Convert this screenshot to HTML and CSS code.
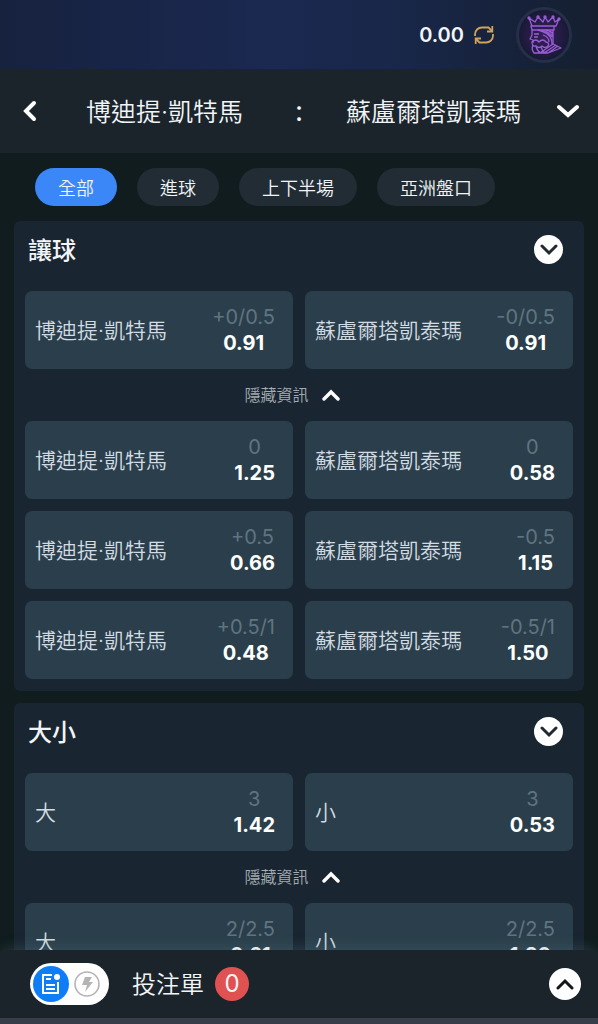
FILE: index.html
```html
<!DOCTYPE html>
<html lang="zh-Hant">
<head>
    <meta charset="UTF-8">
    <meta name="viewport" content="width=device-width, initial-scale=1.0">
    <title>博迪提·凱特馬 : 蘇盧爾塔凱泰瑪</title>
    <link rel="stylesheet" href="styles.css">
</head>
<body>
    <div class="app">
        <header class="topbar">
            <span class="balance">0.00</span>
            <button class="icon-btn refresh" aria-label="重新整理">
                <svg width="20" height="20" viewBox="0 0 20 20" fill="none" stroke="#cfa35a" stroke-width="1.8">
                    <path d="M1 11V9.500C1 5.500 4 2.500 8 2.500h6.500L18 6M19 9v1.500c0 4-3 7-7 7H5.500L2 14"/>
                    <path d="M18.300 1v5.500H13M1.700 19v-5.500H7"/>
                </svg>
            </button>
            <button class="icon-btn avatar" aria-label="會員">
                <svg width="36" height="42" viewBox="0 0 36 42" fill="none" stroke="#9a5fd6" stroke-width="1.3" stroke-linejoin="round">
                    <path d="M6 12 3 4l6 4 3-5 5 5 2-5 3 5 5-5 2 5 4-3-3 7zM5 12h23v4H6z"/>
                    <circle cx="3" cy="4" r="1"/>
                    <circle cx="12" cy="3" r="1"/>
                    <circle cx="19" cy="3" r="1"/>
                    <circle cx="27" cy="3" r="1"/>
                    <circle cx="33" cy="5" r="1"/>
                    <path d="M6 16v5l-2 4 3 1v3M8 20h5M8 23h4"/>
                    <path d="M12 16q8 2 14 7M16 16q7 2 11 6M20 16q5 1 7 4M27 16v14"/>
                    <path d="M6 28q4-4 7 0 4-4 7 0 4 1 2 4-3 3-6 0-3 3-6 0-4 1-4-4zM17 21q6 2 6 7M21 20q5 3 5 10"/>
                    <path d="M7 31q-2 4 1 8h14M10 32q1 5 5 7M15 33q1 4 4 6M14 39l13-9 8 4-13 5M18 39l12-8M22 39l10-7"/>
                </svg>
            </button>
        </header>

        <div class="match">
            <button class="icon-btn" aria-label="返回">
                <svg width="14" height="22" viewBox="0 0 14 22" fill="none" stroke="#fff" stroke-width="4" stroke-linecap="round"><path d="M11 3 3 11l8 8"/></svg>
            </button>
            <h1 class="team">博迪提·凱特馬</h1>
            <span class="versus">:</span>
            <h1 class="team">蘇盧爾塔凱泰瑪</h1>
            <button class="icon-btn" aria-label="選擇賽事">
                <svg width="22" height="14" viewBox="0 0 22 14" fill="none" stroke="#fff" stroke-width="4" stroke-linecap="round"><path d="m2 3 9 8 9-8"/></svg>
            </button>
        </div>

        <nav class="tabs">
            <button class="tab active">全部</button>
            <button class="tab">進球</button>
            <button class="tab">上下半場</button>
            <button class="tab">亞洲盤口</button>
        </nav>

        <main class="markets">
            <section class="market">
                <div class="market-head">
                    <h2>讓球</h2>
                    <button class="round-btn" aria-label="收合">
                        <svg width="18" height="12" viewBox="0 0 18 12" fill="none" stroke="#222a30" stroke-width="3" stroke-linecap="round"><path d="m2 2 7 7 7-7"/></svg>
                    </button>
                </div>
                <div class="odds-row">
                    <button class="odds"><span class="name">博迪提·凱特馬</span><span class="price"><span class="line">+0/0.5</span><b>0.91</b></span></button>
                    <button class="odds"><span class="name">蘇盧爾塔凱泰瑪</span><span class="price"><span class="line">-0/0.5</span><b>0.91</b></span></button>
                </div>
                <button class="toggle-info"><span class="toggle-text">隱藏資訊</span>
                    <svg width="18" height="12" viewBox="0 0 18 12" fill="none" stroke="#fff" stroke-width="3.4" stroke-linecap="round"><path d="m2 10 7-7 7 7"/></svg>
                </button>
                <div class="odds-row">
                    <button class="odds"><span class="name">博迪提·凱特馬</span><span class="price"><span class="line">0</span><b>1.25</b></span></button>
                    <button class="odds"><span class="name">蘇盧爾塔凱泰瑪</span><span class="price"><span class="line">0</span><b>0.58</b></span></button>
                    <button class="odds"><span class="name">博迪提·凱特馬</span><span class="price"><span class="line">+0.5</span><b>0.66</b></span></button>
                    <button class="odds"><span class="name">蘇盧爾塔凱泰瑪</span><span class="price"><span class="line">-0.5</span><b>1.15</b></span></button>
                    <button class="odds"><span class="name">博迪提·凱特馬</span><span class="price"><span class="line">+0.5/1</span><b>0.48</b></span></button>
                    <button class="odds"><span class="name">蘇盧爾塔凱泰瑪</span><span class="price"><span class="line">-0.5/1</span><b>1.50</b></span></button>
                </div>
            </section>

            <section class="market">
                <div class="market-head">
                    <h2>大小</h2>
                    <button class="round-btn" aria-label="收合">
                        <svg width="18" height="12" viewBox="0 0 18 12" fill="none" stroke="#222a30" stroke-width="3" stroke-linecap="round"><path d="m2 2 7 7 7-7"/></svg>
                    </button>
                </div>
                <div class="odds-row">
                    <button class="odds"><span class="name">大</span><span class="price"><span class="line">3</span><b>1.42</b></span></button>
                    <button class="odds"><span class="name">小</span><span class="price"><span class="line">3</span><b>0.53</b></span></button>
                </div>
                <button class="toggle-info"><span class="toggle-text">隱藏資訊</span>
                    <svg width="18" height="12" viewBox="0 0 18 12" fill="none" stroke="#fff" stroke-width="3.4" stroke-linecap="round"><path d="m2 10 7-7 7 7"/></svg>
                </button>
                <div class="odds-row">
                    <button class="odds"><span class="name">大</span><span class="price"><span class="line">2/2.5</span><b>0.61</b></span></button>
                    <button class="odds"><span class="name">小</span><span class="price"><span class="line">2/2.5</span><b>1.20</b></span></button>
                </div>
            </section>
        </main>

        <footer class="betslip">
            <button class="mode" aria-label="切換投注模式">
                <span class="mode-slip">
                    <svg width="20" height="22" viewBox="0 0 20 22" fill="none" stroke="#fff" stroke-width="2">
                        <path d="M11 2H2v18h15V9M5 6h5M5 12h9M5 16h9"/>
                        <circle cx="16" cy="4" r="3" fill="#fff" stroke="none"/>
                    </svg>
                </span>
                <svg width="26" height="26" viewBox="0 0 26 26" fill="none">
                    <circle cx="13" cy="13" r="12" stroke="#b4b4b6" stroke-width="1.6"/>
                    <path d="M11 6h7l-3 5h4l-8 10 2-7H8z" fill="#b4b4b6"/>
                </svg>
            </button>
            <span class="slip-title">投注單</span>
            <span class="count">0</span>
            <button class="round-btn large" aria-label="展開投注單">
                <svg width="18" height="12" viewBox="0 0 18 12" fill="none" stroke="#11171b" stroke-width="3" stroke-linecap="round"><path d="m2 10 7-7 7 7"/></svg>
            </button>
        </footer>
    </div>
</body>
</html>
```
FILE: styles.css
```css
* {
    box-sizing: border-box;
}
body {
    margin: 0;
    background-color: #101c1d;
    color: #f2f5f7;
    font-family: Inter, 'Noto Sans CJK TC', sans-serif;
}
button {
    border: none;
    padding: 0;
    background: none;
    color: inherit;
    font: inherit;
    cursor: pointer;
}
svg {
    display: block;
}
.app {
    display: flex;
    flex-direction: column;
    height: 100vh;
}
.icon-btn {
    display: flex;
    align-items: center;
    justify-content: center;
}

/* 頂部餘額 */
.topbar {
    display: flex;
    flex: none;
    align-items: center;
    justify-content: flex-end;
    height: 69px;
    padding-right: 26px;
    background: linear-gradient(90deg, #17223f 0%, #1b2850 45%, #19274a 65%, #151f30 100%);
}
.balance {
    font-size: 20px;
    font-weight: 600;
}
.refresh {
    margin: 0 22px 0 10px;
}
.avatar {
    width: 56px;
    height: 56px;
    border: 3px solid #252f48;
    border-radius: 50%;
    background: radial-gradient(#37205a 0%, #211b40 55%, #141a30 75%);
}

/* 對賽隊伍 */
.match {
    display: grid;
    flex: none;
    grid-template-columns: 60px 1fr 60px 1fr 60px;
    align-items: center;
    height: 84px;
    background-color: #1b242b;
}
.team {
    margin: 0;
    padding-bottom: 3px;
    font-size: 25px;
    font-weight: 350;
    text-align: center;
    white-space: nowrap;
}
.versus {
    font-size: 28px;
    text-align: center;
}

.tabs {
    display: flex;
    flex: none;
    gap: 20px;
    padding: 15px 35px;
}
.tab {
    height: 38px;
    padding: 0 23px;
    border-radius: 19px;
    background-color: #212c35;
    font-size: 18px;
    font-weight: 350;
}
.tab.active {
    background-color: #3c87f7;
}

/* 盤口 */
.markets {
    flex: 1;
    min-height: 0;
    padding: 0 14px;
    overflow-y: auto;
    scrollbar-width: none;
}
.market {
    margin-bottom: 12px;
    padding: 0 11px 12px;
    border-radius: 6px;
    background-color: #192530;
}
.market-head {
    display: flex;
    align-items: center;
    justify-content: space-between;
    height: 70px;
    padding: 0 10px 13px 3px;
}
.market-head h2 {
    margin: 0;
    padding-bottom: 3px;
    font-size: 24px;
    font-weight: 500;
}
.round-btn {
    display: flex;
    align-items: center;
    justify-content: center;
    width: 29px;
    height: 29px;
    border-radius: 50%;
    background-color: #fff;
}
.round-btn.large {
    width: 32px;
    height: 32px;
    margin-left: auto;
}
.odds-row {
    display: grid;
    grid-template-columns: 1fr 1fr;
    gap: 12px;
}
.odds {
    display: flex;
    align-items: center;
    justify-content: space-between;
    height: 78px;
    padding: 0 18px 0 10px;
    border-radius: 7px;
    background-color: #2a3f4b;
}
.name {
    padding-bottom: 3px;
    color: #d3dce2;
    font-size: 21px;
    font-weight: 350;
    white-space: nowrap;
}
.price {
    display: flex;
    flex-direction: column;
    align-items: center;
    color: #fff;
    font-size: 20px;
    line-height: 26px;
}
.price b {
    font-weight: 700;
}
.line {
    color: #607480;
}
.toggle-info {
    display: flex;
    align-items: center;
    justify-content: center;
    gap: 13px;
    width: 100%;
    height: 52px;
    padding-right: 14px;
    color: #a3acb2;
    font-size: 16px;
    font-weight: 350;
}
.toggle-text {
    padding-bottom: 3px;
}

/* 投注單 */
.betslip {
    display: flex;
    position: relative;
    flex: none;
    align-items: center;
    height: 74px;
    margin-top: -10px;
    padding: 0 17px 0 30px;
    border-bottom: 6px solid #373e49;
    border-radius: 10px 10px 0 0;
    background-color: #1b242b;
    box-shadow: 0 -2px 14px rgba(90, 125, 135, 0.3);
}
.mode {
    display: flex;
    align-items: center;
    gap: 5px;
    width: 79px;
    height: 42px;
    padding: 0 3px;
    border-radius: 21px;
    background-color: #fff;
}
.mode-slip {
    display: flex;
    align-items: center;
    justify-content: center;
    width: 36px;
    height: 36px;
    border-radius: 50%;
    background-color: #0f7df5;
}
.slip-title {
    margin-left: 23px;
    padding-bottom: 3px;
    font-size: 24px;
    font-weight: 350;
}
.count {
    width: 34px;
    height: 34px;
    margin-left: 11px;
    border-radius: 50%;
    background-color: #e05252;
    font-size: 24px;
    line-height: 34px;
    text-align: center;
}
```
